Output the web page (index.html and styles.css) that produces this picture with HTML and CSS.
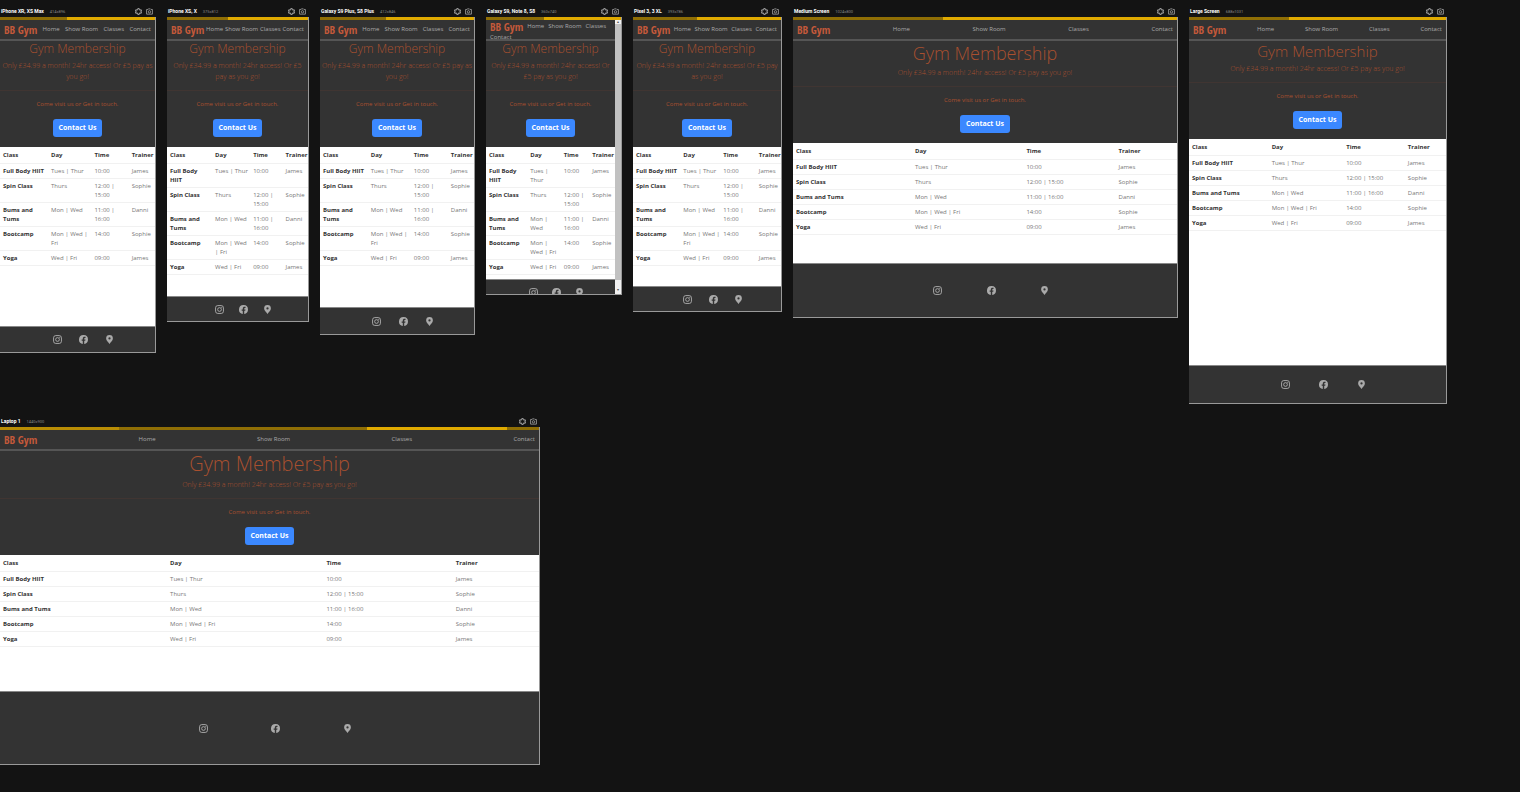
FILE: index.html
```html
<!DOCTYPE html>
<html lang="en">
<head>
<meta charset="utf-8">
<meta name="viewport" content="width=device-width, initial-scale=1">
<title>Device gallery</title>
<link rel="stylesheet" href="styles.css">
</head>
<body>
<svg class="sprite" aria-hidden="true">
  <symbol id="gear" viewBox="0 0 24 24"><path fill="none" stroke="currentColor" stroke-width="3.500" stroke-linejoin="round" d="M10 2h4l1 3.500 2 1.200 3.500-1 2 3.600L20 12l2.500 2.700-2 3.600-3.500-1-2 1.200-1 3.500h-4l-1-3.500-2-1.200-3.500 1-2-3.600L4 12 1.500 9.300l2-3.600 3.500 1 2-1.200z"/></symbol>
  <symbol id="camera" viewBox="0 0 24 24"><path fill="none" stroke="currentColor" stroke-width="3" d="M2 5h5l2-2h6l2 2h5v16H2z"/><circle cx="12" cy="13" r="4" fill="none" stroke="currentColor" stroke-width="3"/></symbol>
  <symbol id="instagram" viewBox="0 0 24 24"><g fill="none" stroke="currentColor" stroke-width="2.500"><rect x="1.500" y="1.500" width="21" height="21" rx="6"/><circle cx="12" cy="12" r="5"/></g><circle cx="18" cy="6" r="1.600" fill="currentColor"/></symbol>
  <symbol id="facebook" viewBox="0 0 24 24"><path fill="currentColor" d="M24 12a12 12 0 1 0-13.900 11.900v-8.400H7.100V12h3V9.400c0-3 1.800-4.700 4.600-4.700 1.300 0 2.700.2 2.700.2v3h-1.500c-1.500 0-2 .9-2 1.900V12h3.400l-.6 3.500h-2.800v8.400A12 12 0 0 0 24 12z"/></symbol>
  <symbol id="pin" viewBox="0 0 24 24"><path fill="currentColor" fill-rule="evenodd" d="M12 0a9 9 0 0 0-9 9c0 5.500 5.500 8.500 9 15 3.500-6.500 9-9.500 9-15a9 9 0 0 0-9-9zm0 6a3 3 0 1 1 0 6 3 3 0 0 1 0-6z"/></symbol>
</svg>
<main class="gallery">
  <div class="row row-top" id="row-top"></div>
  <div class="row row-bottom" id="row-bottom"></div>
</main>
<script src="gallery.js"></script>
</body>
</html>
```

FILE: styles.css
```css
* { box-sizing: border-box; }

body {
  margin: 0;
  min-height: 100vh;
  background: #131313;
  font-family: "Open Sans", "Noto Sans", sans-serif;
  font-size: 6px;
  line-height: 9px;
  color: #777;
}

.sprite { display: none; }

.gallery { display: flex; flex-direction: column; gap: 6px; }
.row { display: grid; align-items: start; gap: 11px; }
.row-top {
  padding-right: 73px;
  grid-template-columns:
    minmax(0, 156fr) minmax(0, 142fr) minmax(0, 155fr) minmax(0, 136fr)
    minmax(0, 149fr) minmax(0, 385fr) minmax(0, 258fr);
}
.row-bottom { grid-template-columns: minmax(0, 540fr) minmax(0, 969fr); }

/* Title strip over each screen */
.caption {
  display: flex;
  align-items: center;
  height: 17px;
  padding: 6px 3px 0 1px;
  font-family: Roboto, sans-serif;
}
.caption h2 { margin: 0 6px 0 0; font-size: 5px; font-weight: 700; color: #fff; white-space: nowrap; }
.caption span { flex: 1; font-size: 4px; color: #888; }
.tool { padding: 0; margin-left: 4px; border: 0; background: none; color: #999; line-height: 0; }
.tool svg { width: 7px; height: 7px; }

/* Screen */
.screen { position: relative; display: flex; flex-direction: column; overflow: hidden; background: #fff; border: solid #999; border-width: 0 1px 1px 0; }
.site { display: flex; flex: 1; flex-direction: column; min-width: 0; }
.stripe { flex: none; height: 3px; background: linear-gradient(90deg, #8f6e05 var(--split), #e0aa00 var(--split)); }

.nav { flex: none; display: flex; justify-content: space-between; align-items: center; height: 21px; padding: 0 4px; overflow: hidden; background: #333; border-bottom: 2px solid #555; }
.nav a { color: #aaa; text-decoration: none; white-space: nowrap; }
.nav .brand { font: 700 11px/18px Impact, "Liberation Sans Narrow", "Open Sans Condensed", "DejaVu Sans Condensed", sans-serif; color: #c4593a; }

.hero { flex: none; padding-bottom: 10px; background: #333; color: #a9502f; text-align: center; }
.hero h1 { margin: 0 0 3px; font-size: 12px; font-weight: 300; line-height: 16px; }
.lead { margin: 0 0 8px; font-size: 7px; font-weight: 300; line-height: 11px; }
.hero hr { margin: 0 0 9px; border: 0; border-top: 1px solid #403532; }
.hero p.note { margin: 0 0 10px; }
.button { height: 18px; padding: 0 6px; border: 0; border-radius: 3px; background: #3b88ff; color: #fff; font: 700 7px/18px "Open Sans", "Noto Sans", sans-serif; }

.classes { flex: 1; background: #fff; }
.classes table { width: 100%; table-layout: fixed; border-collapse: collapse; }
.classes th, .classes td { padding: 3px 0 2px 3px; border-bottom: 1px solid #f1f1f1; text-align: left; vertical-align: top; font-weight: 400; }
.classes th { font-weight: 700; color: #333; }
.classes thead th { padding-top: 4px; padding-bottom: 3px; white-space: nowrap; }
.classes tbody th { padding-right: 3px; }
.c1 { width: var(--c1); }
.c2 { width: var(--c2); }
.c3 { width: var(--c3); }

.footer { flex: none; display: flex; justify-content: center; align-items: center; gap: 12%; height: var(--foot); padding-left: 12px; background: #333; border-top: 1px solid #888; }
.footer a { color: #aaa; line-height: 0; }
.footer svg { width: 9px; height: 9px; }

/* Devices */
.iphone-xr { --split: 43%; --foot: 26px; --c1: 31%; --c2: 28%; --c3: 24%; aspect-ratio: 156 / 336; }
.iphone-x { --split: 43%; --foot: 25px; --c1: 32%; --c2: 27%; --c3: 23%; aspect-ratio: 142 / 305; }
.galaxy-plus { --split: 43%; --foot: 27px; --c1: 31%; --c2: 28%; --c3: 24%; aspect-ratio: 155 / 318; }
.galaxy { --split: 43%; --foot: 25px; --c1: 32%; --c2: 26%; --c3: 22%; aspect-ratio: 136 / 278; min-height: 0; }
.pixel { --split: 43%; --foot: 25px; --c1: 32%; --c2: 27%; --c3: 24%; aspect-ratio: 149 / 295; }
.medium { --split: 39%; --foot: 54px; --c1: 31%; --c2: 29%; --c3: 24%; aspect-ratio: 385 / 301; }
.large { --split: 39%; --foot: 38px; --c1: 31%; --c2: 29%; --c3: 24%; aspect-ratio: 258 / 387; }
.laptop { --foot: 73px; --c1: 31%; --c2: 29%; --c3: 24%; aspect-ratio: 540 / 338; }

.large .hero h1 { margin-bottom: 2px; font-size: 15px; line-height: 20px; }
.medium .hero h1 { margin-bottom: 2px; font-size: 18px; line-height: 24px; }
.laptop .hero h1 { margin-bottom: 2px; font-size: 20px; line-height: 26px; }
.laptop .stripe { background: linear-gradient(90deg, #b98d05 22%, #8f6e05 22% 68%, #e0aa00 68% 94%, #8f6e05 94%); }

.galaxy .site { padding-right: 6px; }
.galaxy .stripe { margin-right: -6px; }
.galaxy .nav { flex-wrap: wrap; justify-content: flex-start; align-content: flex-start; gap: 0 4px; padding-right: 0; }
.galaxy .nav .brand { line-height: 13px; }
.galaxy .lead { padding: 0 3px; }
.galaxy .classes { flex: none; padding-bottom: 4px; }
.scrollbar { position: absolute; top: 3px; right: 0; bottom: 0; display: flex; flex-direction: column; width: 6px; background: #f1f1f1; color: #555; font-size: 4px; line-height: 4px; text-align: center; }
.scrollbar::before { content: "▴"; height: 4px; }
.scrollbar::after { content: "▾"; height: 14px; line-height: 20px; }
.thumb { flex: 1; background: #c1c1c1; }
```

FILE: gallery.js
```js
const phones = [
  ["iphone-xr", "iPhone XR, XS Max", "414x896"],
  ["iphone-x", "iPhone XS, X", "375x812"],
  ["galaxy-plus", "Galaxy S9 Plus, S8 Plus", "412x846"],
  ["galaxy", "Galaxy S9, Note 8, S8", "360x740"],
  ["pixel", "Pixel 3, 3 XL", "393x786"],
  ["medium", "Medium Screen", "1024x800"],
  ["large", "Large Screen", "688x1031"]
];
const laptops = [["laptop", "Laptop 1", "1440x900"]];

const timetable = [
  ["Full Body HIIT", "Tues | Thur", "10:00", "James"],
  ["Spin Class", "Thurs", "12:00 | 15:00", "Sophie"],
  ["Bums and Tums", "Mon | Wed", "11:00 | 16:00", "Danni"],
  ["Bootcamp", "Mon | Wed | Fri", "14:00", "Sophie"],
  ["Yoga", "Wed | Fri", "09:00", "James"]
];

const icon = (id) => `<svg aria-hidden="true"><use href="#${id}"/></svg>`;
const rows = timetable.map(([name, ...cells]) =>
  `<tr><th scope="row">${name}</th>${cells.map((c) => `<td>${c}</td>`).join("")}</tr>`).join("");

const device = ([kind, name, size]) => `
<section>
  <header class="caption">
    <h2>${name}</h2><span>${size}</span>
    <button class="tool" aria-label="Settings">${icon("gear")}</button>
    <button class="tool" aria-label="Screenshot">${icon("camera")}</button>
  </header>
  <div class="screen ${kind}">
    <div class="site">
      <div class="stripe"></div>
      <nav class="nav">
        <a class="brand" href="#">BB Gym</a>
        <a href="#">Home</a><a href="#">Show Room</a><a href="#">Classes</a><a href="#">Contact</a>
      </nav>
      <div class="hero">
        <h1>Gym Membership</h1>
        <p class="lead">Only £34.99 a month! 24hr access! Or £5 pay as you go!</p>
        <hr>
        <p class="note">Come visit us or Get in touch.</p>
        <button class="button">Contact Us</button>
      </div>
      <div class="classes">
        <table>
          <colgroup><col class="c1"><col class="c2"><col class="c3"><col></colgroup>
          <thead><tr><th scope="col">Class</th><th scope="col">Day</th><th scope="col">Time</th><th scope="col">Trainer</th></tr></thead>
          <tbody>${rows}</tbody>
        </table>
      </div>
      <footer class="footer">
        <a href="#" aria-label="Instagram">${icon("instagram")}</a>
        <a href="#" aria-label="Facebook">${icon("facebook")}</a>
        <a href="#" aria-label="Location">${icon("pin")}</a>
      </footer>
    </div>
    ${kind === "galaxy" ? '<div class="scrollbar"><div class="thumb"></div></div>' : ""}
  </div>
</section>`;

document.getElementById("row-top").innerHTML = phones.map(device).join("");
document.getElementById("row-bottom").innerHTML = laptops.map(device).join("");
```
